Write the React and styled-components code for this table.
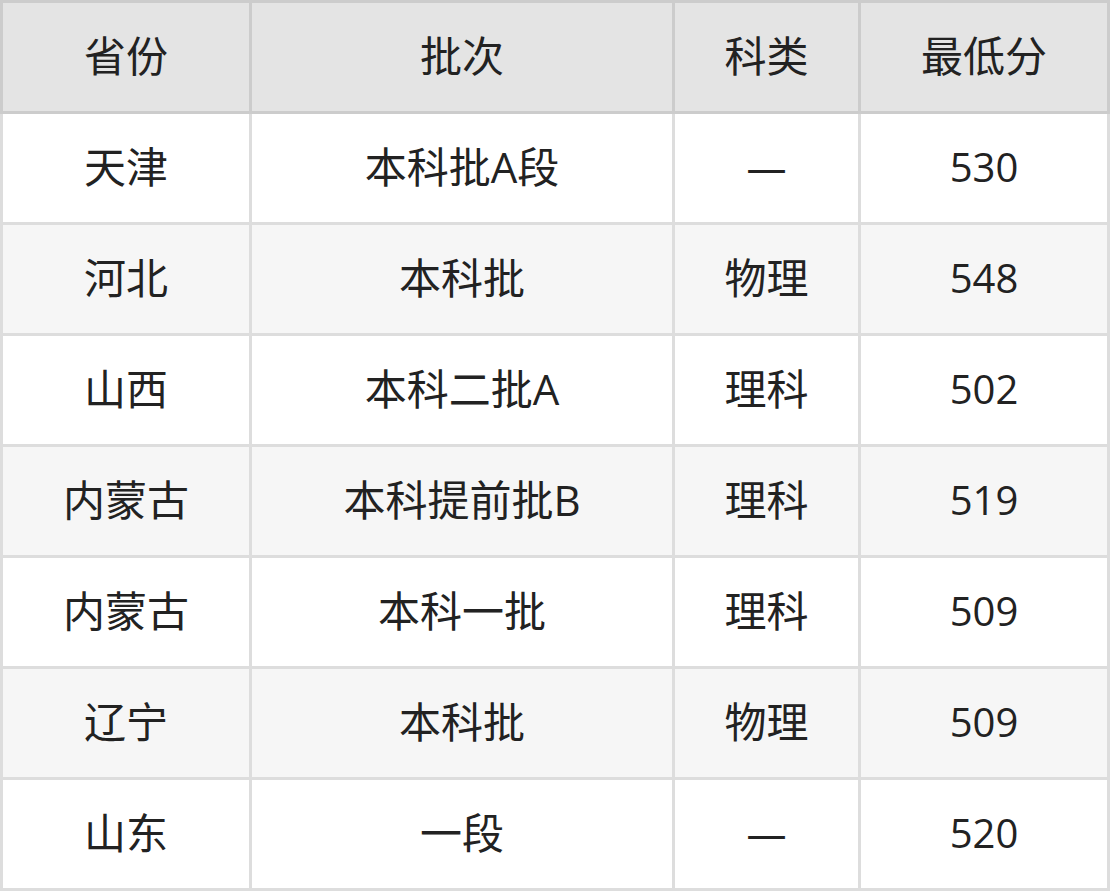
import React from "react";
import styled, { createGlobalStyle } from "styled-components";

const Global = createGlobalStyle`
  html, body { margin: 0; padding: 0; background: #fff; }
  body { font-family: "Open Sans", "Noto Sans CJK SC", sans-serif; }
`;

const Table = styled.div`
  display: flex;
  flex-direction: column;
  width: 1110px;
`;

const Row = styled.div`
  display: grid;
  grid-template-columns: 246px 420px 183px 246px;
  column-gap: 3px;
  padding: ${(p) => (p.$head ? "3px" : "0 3px 3px")};
  background: ${(p) => (p.$head ? "#cccccc" : "#dddddd")};
`;

const Cell = styled.div`
  height: 108px;
  display: flex;
  align-items: center;
  justify-content: center;
  font-size: ${(p) => (p.$latin ? "40px" : "42px")};
  line-height: 1;
  padding-bottom: 3px;
  box-sizing: border-box;
  color: #222222;
  background: ${(p) => (p.$head ? "#e4e4e4" : p.$alt ? "#f6f6f6" : "#ffffff")};
`;

const rows = [
  ["天津", "本科批A段", "—", "530"],
  ["河北", "本科批", "物理", "548"],
  ["山西", "本科二批A", "理科", "502"],
  ["内蒙古", "本科提前批B", "理科", "519"],
  ["内蒙古", "本科一批", "理科", "509"],
  ["辽宁", "本科批", "物理", "509"],
  ["山东", "一段", "—", "520"],
];

const isLatin = (s) => /^[0-9—]+$/.test(s);

export default function App() {
  return (
    <>
      <Global />
      <Table>
        <Row $head>
          {["省份", "批次", "科类", "最低分"].map((h) => (
            <Cell key={h} $head>
              {h}
            </Cell>
          ))}
        </Row>
        {rows.map((r, i) => (
          <Row key={i}>
            {r.map((c, j) => (
              <Cell key={j} $alt={i % 2 === 1} $latin={isLatin(c)}>
                {c}
              </Cell>
            ))}
          </Row>
        ))}
      </Table>
    </>
  );
}
